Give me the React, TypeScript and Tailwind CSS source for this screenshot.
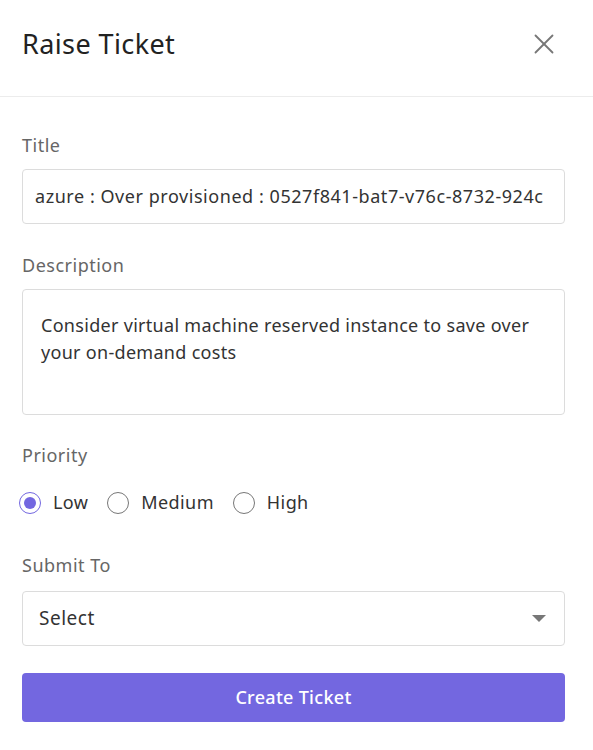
import React, { useState } from 'react';
import { X } from 'lucide-react';

const priorities = ['Low', 'Medium', 'High'];

export default function App() {
  const [priority, setPriority] = useState('Low');

  return (
    <div className="w-[593px] h-[750px] bg-white font-['Noto_Sans',sans-serif] text-[#333]">
      {/* header */}
      <div className="flex items-center justify-between h-[97px] pb-[8px] pl-[22px] pr-[32px] border-b border-[#ececec]">
        <h2 className="text-[27px] tracking-[0.4px] font-normal text-[#222]">Raise Ticket</h2>
        <X className="w-[34px] h-[34px] text-[#777]" strokeWidth={1.3} />
      </div>

      <div className="px-[22px] pt-[36px] pr-[28px]">
        <label className="block text-[18px] tracking-[0.5px] text-[#666] leading-[24px]">Title</label>
        <div className="mt-[12px] h-[55px] flex items-center px-[12px] border border-[#dcdcdc] rounded-[4px] text-[18px] tracking-[0.55px] text-[#333] whitespace-nowrap overflow-hidden">
          azure : Over provisioned : 0527f841-bat7-v76c-8732-924c
        </div>

        <label className="block mt-[29px] text-[18px] tracking-[0.5px] text-[#666] leading-[24px]">Description</label>
        <div className="mt-[12px] h-[126px] px-[18px] pt-[22px] border border-[#dcdcdc] rounded-[4px] text-[18px] tracking-[0.3px] leading-[27px] text-[#333]">
          Consider virtual machine reserved instance to save over your on-demand costs
        </div>

        <label className="block mt-[28px] text-[18px] tracking-[0.5px] text-[#666] leading-[24px]">Priority</label>
        <div className="mt-[22px] flex items-center gap-[19px] -ml-[3px]">
          {priorities.map((p) => {
            const active = p === priority;
            return (
              <button key={p} onClick={() => setPriority(p)} className="flex items-center gap-[12px]">
                <span
                  className={`w-[22px] h-[22px] rounded-full border flex items-center justify-center ${
                    active ? 'border-[#7367e0]' : 'border-[#777]'
                  }`}
                >
                  {active && <span className="w-[12px] h-[12px] rounded-full bg-[#7367e0]" />}
                </span>
                <span className="text-[18px] tracking-[0.4px] text-[#333]">{p}</span>
              </button>
            );
          })}
        </div>

        <label className="block mt-[37px] text-[18px] tracking-[0.5px] text-[#666] leading-[24px]">Submit To</label>
        <div className="mt-[14px] h-[55px] flex items-center justify-between pl-[16px] pr-[18px] border border-[#dcdcdc] rounded-[4px]">
          <span className="text-[19px] tracking-[0.5px] text-[#333]">Select</span>
          <svg width="14" height="8" viewBox="0 0 14 8">
            <path d="M0 0 L14 0 L7 7 Z" fill="#777" />
          </svg>
        </div>

        <button className="mt-[27px] w-full h-[49px] rounded-[4px] bg-[#7367e0] text-white text-[18px] tracking-[0.3px] font-medium">
          Create Ticket
        </button>
      </div>
    </div>
  );
}
